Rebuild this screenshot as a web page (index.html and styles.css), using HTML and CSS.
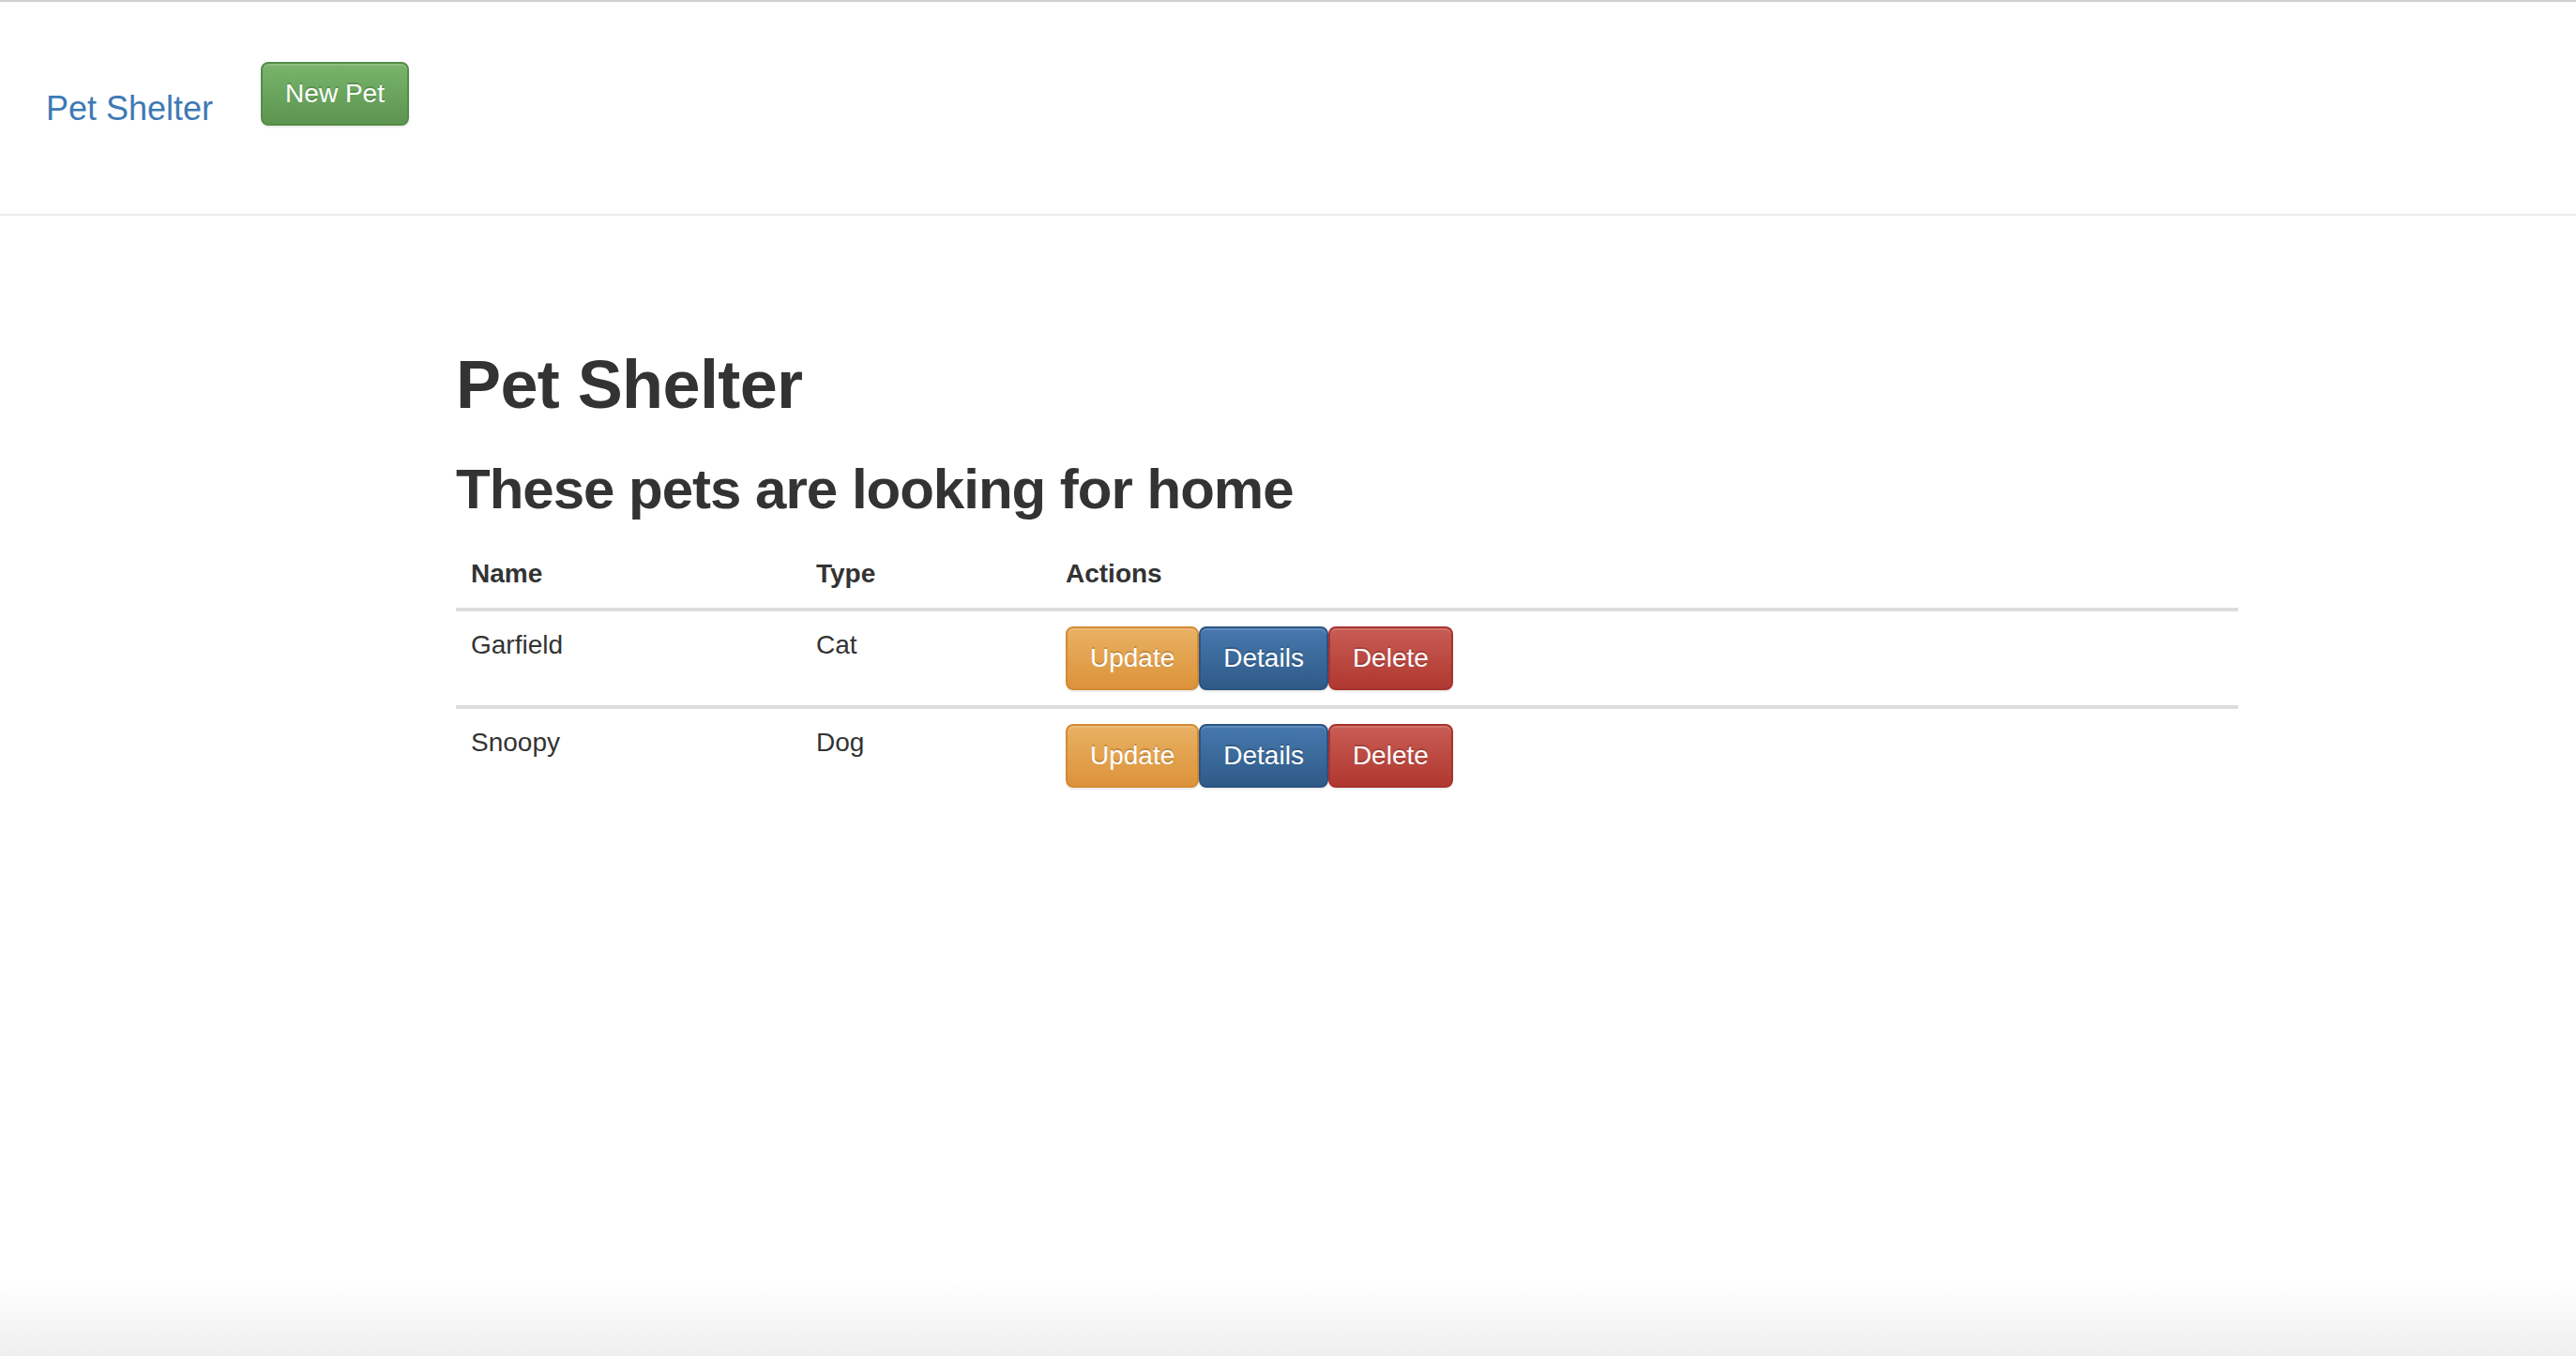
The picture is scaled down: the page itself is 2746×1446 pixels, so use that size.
FILE: index.html
```html
<!DOCTYPE html>
<html lang="en">
<head>
<meta charset="utf-8">
<title>Pet Shelter</title>
<link rel="stylesheet" href="styles.css">
</head>
<body>
<nav class="navbar">
  <a class="brand" href="#">Pet Shelter</a>
  <a class="btn btn-success" href="#">New Pet</a>
</nav>
<main class="main">
  <h1 class="title">Pet Shelter</h1>
  <h2 class="subtitle">These pets are looking for home</h2>
  <table class="table">
    <thead>
      <tr>
        <th class="col-name">Name</th>
        <th class="col-type">Type</th>
        <th class="col-actions">Actions</th>
      </tr>
    </thead>
    <tbody>
      <tr>
        <td>Garfield</td>
        <td>Cat</td>
        <td><div class="actions"><a class="btn btn-warning" href="#">Update</a><a class="btn btn-primary" href="#">Details</a><a class="btn btn-danger" href="#">Delete</a></div></td>
      </tr>
      <tr>
        <td>Snoopy</td>
        <td>Dog</td>
        <td><div class="actions"><a class="btn btn-warning" href="#">Update</a><a class="btn btn-primary" href="#">Details</a><a class="btn btn-danger" href="#">Delete</a></div></td>
      </tr>
    </tbody>
  </table>
</main>
<div class="window-shade"></div>
</body>
</html>
```

FILE: styles.css
```css
html, body {
  margin: 0;
  padding: 0;
  background: #ffffff;
}

body {
  font-family: "Liberation Sans", Arial, Helvetica, sans-serif;
  font-size: 28px;
  line-height: 40px;
  color: #333333;
  min-height: 1446px;
  position: relative;
  overflow: hidden;
}

a {
  text-decoration: none;
}

.navbar {
  display: flex;
  align-items: flex-start;
  gap: 51px;
  box-sizing: border-box;
  height: 230px;
  padding: 64px 0 0 49px;
  border-top: 2px solid #cfcfcf;
  border-bottom: 2px solid #ececec;
  background: #ffffff;
}

.brand {
  display: block;
  padding-top: 30px;
  font-size: 36px;
  line-height: 40px;
  color: #3f79b5;
}

.btn {
  display: inline-block;
  padding: 12px 24px;
  font-size: 28px;
  line-height: 40px;
  font-weight: 400;
  color: #ffffff;
  text-align: center;
  white-space: nowrap;
  border: 2px solid transparent;
  border-radius: 8px;
  text-shadow: 0 -2px 0 rgba(0, 0, 0, 0.18);
  box-shadow: inset 0 2px 0 rgba(255, 255, 255, 0.15), 0 2px 2px rgba(0, 0, 0, 0.075);
}

.btn-success {
  background: linear-gradient(to bottom, #79b56b 0%, #5c9450 100%);
  border-color: #548c48;
}

.btn-warning {
  background: linear-gradient(to bottom, #e9b163 0%, #dc933a 100%);
  border-color: #d48b34;
}

.btn-primary {
  background: linear-gradient(to bottom, #4679af 0%, #2f5a87 100%);
  border-color: #2b5582;
}

.btn-danger {
  background: linear-gradient(to bottom, #c85c54 0%, #b03830 100%);
  border-color: #a8332d;
}

.main {
  margin-left: 486px;
  width: 1900px;
  padding-top: 101px;
}

.title {
  margin: 40px 0 20px;
  font-size: 72px;
  line-height: 79px;
  font-weight: 700;
  letter-spacing: -0.6px;
}

.subtitle {
  margin: 39px 0 21px;
  font-size: 60px;
  line-height: 66px;
  font-weight: 700;
  letter-spacing: -1px;
}

.table {
  width: 100%;
  border-collapse: collapse;
  border-spacing: 0;
}

.table th {
  text-align: left;
  font-weight: 700;
  padding: 16px;
  line-height: 40px;
  vertical-align: bottom;
  border-bottom: 4px solid #dddddd;
}

.table td {
  padding: 16px;
  line-height: 40px;
  vertical-align: top;
  border-top: 4px solid #dddddd;
}

.col-name {
  width: 336px;
}

.col-type {
  width: 234px;
}

.actions {
  display: flex;
}

.window-shade {
  position: absolute;
  left: 0;
  right: 0;
  bottom: 0;
  height: 80px;
  background: linear-gradient(to bottom, rgba(239, 239, 239, 0) 0%, rgba(239, 239, 239, 1) 100%);
  pointer-events: none;
}
```
